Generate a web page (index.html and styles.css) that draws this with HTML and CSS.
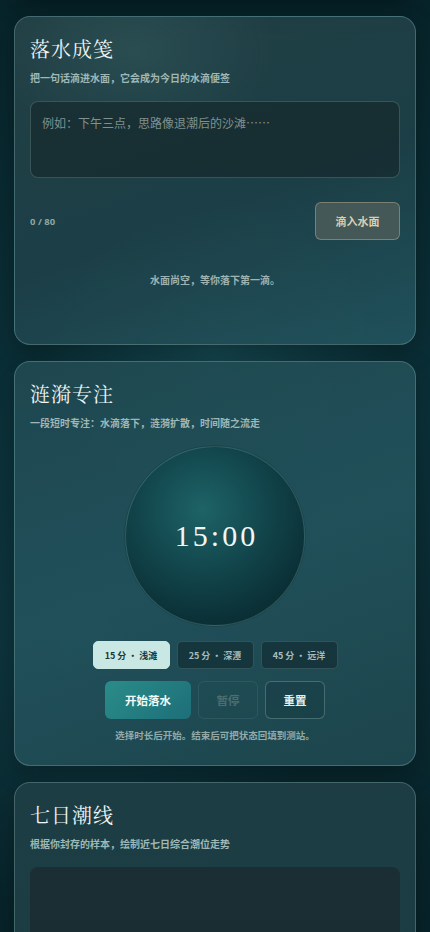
FILE: index.html
```html
<!DOCTYPE html>
<html lang="zh-CN">
<head>
<meta charset="utf-8">
<title>水面</title>
<link rel="stylesheet" href="styles.css">
</head>
<body>
<main class="page">
  <section class="card card-prev"></section>

  <section class="card card-note">
    <h2 class="card-title">落水成笺</h2>
    <p class="card-sub">把一句话滴进水面，它会成为今日的水滴便签</p>
    <div class="note-input">例如：下午三点，思路像退潮后的沙滩……</div>
    <div class="note-row">
      <span class="count">0 / 80</span>
      <button class="drop-btn">滴入水面</button>
    </div>
    <p class="empty">水面尚空，等你落下第一滴。</p>
  </section>

  <section class="card card-focus">
    <h2 class="card-title">涟漪专注</h2>
    <p class="card-sub">一段短时专注：水滴落下，涟漪扩散，时间随之流走</p>
    <div class="orb-wrap">
      <div class="orb"><span class="time">15:00</span></div>
    </div>
    <div class="chips">
      <button class="chip active">15 分 · 浅滩</button>
      <button class="chip">25 分 · 深潭</button>
      <button class="chip">45 分 · 远洋</button>
    </div>
    <div class="actions">
      <button class="btn btn-start">开始落水</button>
      <button class="btn btn-pause">暂停</button>
      <button class="btn btn-reset">重置</button>
    </div>
    <p class="hint">选择时长后开始。结束后可把状态回填到测站。</p>
  </section>

  <section class="card card-tide">
    <h2 class="card-title">七日潮线</h2>
    <p class="card-sub">根据你封存的样本，绘制近七日综合潮位走势</p>
    <div class="chart"></div>
  </section>
</main>
</body>
</html>
```
FILE: styles.css
```css
* { box-sizing: border-box; }
html, body { margin: 0; padding: 0; }
body {
  height: 932px;
  overflow: hidden;
  font-family: "Noto Sans CJK SC", "Noto Sans", sans-serif;
  color: #e6f0ef;
  background-color: #0a2a31;
  background-image:
    radial-gradient(ellipse 60% 30% at 50% 38%, rgba(30,90,100,0.55), rgba(10,42,49,0) 70%),
    radial-gradient(ellipse 80% 40% at 20% 70%, rgba(20,70,80,0.5), rgba(10,42,49,0) 70%),
    linear-gradient(180deg, #07242a 0%, #0b3038 45%, #0a2a31 70%, #072329 100%);
}
.page {
  padding: 0 14px;
  display: flex;
  flex-direction: column;
  gap: 16px;
}
.card {
  border: 1px solid rgba(170, 210, 210, 0.28);
  border-radius: 16px;
  padding: 19px 15px 16px;
  background:
    radial-gradient(ellipse 50% 40% at 30% 10%, rgba(70,120,120,0.25), rgba(0,0,0,0) 70%),
    linear-gradient(160deg, rgba(36,66,70,0.92) 0%, rgba(30,64,72,0.92) 55%, rgba(34,84,94,0.92) 100%);
  box-shadow: 0 8px 24px rgba(0,0,0,0.25);
}
.card-prev {
  height: 120px;
  margin-top: -120px;
}
.card-title {
  margin: 0;
  font-family: "Noto Serif CJK SC", "Noto Serif SC", "Source Han Serif SC", "AR PL UMing CN", "Liberation Serif", serif;
  font-weight: 400;
  font-size: 20px;
  line-height: 26px;
  letter-spacing: 1px;
  color: #eef5f4;
}
.card-sub {
  margin: 9px 0 0;
  font-size: 10px;
  line-height: 14px;
  font-weight: 700;
  color: #9fb8b6;
}
.note-input {
  margin-top: 16px;
  height: 77px;
  border: 1px solid rgba(160, 200, 200, 0.25);
  border-radius: 8px;
  background: rgba(20, 36, 40, 0.6);
  padding: 13px 11px;
  font-size: 12px;
  line-height: 16px;
  color: #7f918f;
}
.note-row {
  margin-top: 24px;
  display: flex;
  justify-content: space-between;
  align-items: center;
}
.count {
  font-family: "Noto Sans", sans-serif;
  font-size: 9.5px;
  font-weight: 700;
  color: #8ea6a4;
}
.drop-btn {
  width: 85px;
  height: 38px;
  border: 1px solid rgba(190, 180, 150, 0.45);
  border-radius: 6px;
  background: #435857;
  color: #d8cfb4;
  font-family: "Noto Sans CJK SC", sans-serif;
  font-size: 11px;
  font-weight: 700;
}
.empty {
  margin: 33px 0 41px;
  text-align: center;
  font-size: 10px;
  line-height: 14px;
  font-weight: 700;
  color: #9fb4b2;
}
.card-focus {
  padding-top: 19px;
  padding-bottom: 24px;
  background:
    linear-gradient(160deg, rgba(32,72,80,0.95) 0%, rgba(34,82,92,0.95) 50%, rgba(30,70,78,0.95) 100%);
}
.orb-wrap {
  margin-top: 16px;
  display: flex;
  justify-content: center;
}
.orb {
  width: 180px;
  height: 180px;
  border-radius: 50%;
  border: 1px solid rgba(120, 170, 170, 0.3);
  background: radial-gradient(circle at 43% 35%, #1e6366 0%, #134a50 35%, #0b3238 70%, #08272d 100%);
  display: flex;
  align-items: center;
  justify-content: center;
  box-shadow: 0 0 0 1px rgba(0,0,0,0.1);
}
.time {
  font-family: "Liberation Serif", serif;
  font-size: 30px;
  letter-spacing: 3px;
  margin-left: 3px;
  color: #f2f7f6;
}
.chips {
  margin-top: 15px;
  display: flex;
  justify-content: center;
  gap: 7px;
}
.chip {
  width: 77px;
  height: 28px;
  border-radius: 5px;
  border: 1px solid rgba(150, 190, 190, 0.22);
  background: rgba(14, 36, 42, 0.55);
  color: #a7bcbb;
  font-family: "Noto Sans CJK SC", sans-serif;
  font-size: 9px;
  font-weight: 700;
  padding: 0;
}
.chip.active {
  background: #c9e8e3;
  border-color: #c9e8e3;
  color: #1d383b;
}
.actions {
  margin-top: 12px;
  display: flex;
  justify-content: center;
  gap: 7px;
}
.btn {
  height: 38px;
  border-radius: 6px;
  font-family: "Noto Sans CJK SC", sans-serif;
  font-size: 11.5px;
  font-weight: 700;
  padding: 0;
}
.btn-start {
  width: 86px;
  border: none;
  background: linear-gradient(135deg, #2a8d89 0%, #1d6e78 100%);
  color: #f2fbfa;
}
.btn-pause {
  width: 60px;
  border: 1px solid rgba(150, 190, 190, 0.12);
  background: transparent;
  color: #4c6e6f;
}
.btn-reset {
  width: 60px;
  border: 1px solid rgba(170, 210, 210, 0.3);
  background: rgba(20, 50, 56, 0.3);
  color: #e3efee;
}
.hint {
  margin: 10px 0 0;
  text-align: center;
  font-size: 9.5px;
  line-height: 12px;
  font-weight: 700;
  color: #93aaa9;
}
.card-tide {
  background: linear-gradient(180deg, rgba(30,62,68,0.95) 0%, rgba(30,64,70,0.95) 100%);
}
.chart {
  margin-top: 16px;
  height: 200px;
  border-radius: 8px;
  background: linear-gradient(180deg, #1a2e33 0%, #172b30 100%);
}
```
